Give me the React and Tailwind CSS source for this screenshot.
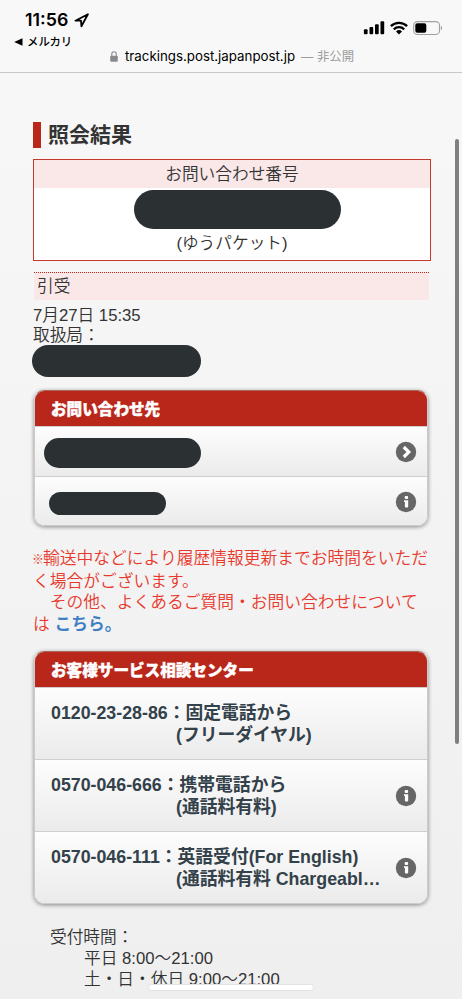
import React from "react";

// icons

function ArrowIcon() {
  return (
    <svg width="22" height="22" viewBox="0 0 22 22" className="block">
      <circle cx="11" cy="11" r="10.2" fill="#666" />
      <path d="M8.8 6 L13.8 11 L8.8 16" fill="none" stroke="#fff" strokeWidth="3.2" />
    </svg>
  );
}

function InfoIcon() {
  return (
    <svg width="22" height="22" viewBox="0 0 22 22" className="block">
      <circle cx="11" cy="11" r="10.2" fill="#666" />
      <rect x="9.7" y="5.1" width="3.4" height="2.9" rx="0.9" fill="#fff" />
      <path d="M9 9.3h4.2v6.3q0 1-1 1h-1.3q-1 0-1-1v-4.6H9z" fill="#fff" />
    </svg>
  );
}

function SignalIcon() {
  return (
    <svg width="22" height="14" viewBox="0 0 22 14" className="block">
      <rect x="0.9" y="8.2" width="3.7" height="5" rx="1" />
      <rect x="6.5" y="6" width="3.7" height="7.2" rx="1" />
      <rect x="12" y="3.2" width="3.7" height="10" rx="1" />
      <rect x="17.5" y="0.3" width="3.7" height="12.9" rx="1" />
    </svg>
  );
}

function WifiIcon() {
  return (
    <svg width="18" height="14" viewBox="0 0 18 14" className="block">
      <g fill="none" stroke="#000" strokeWidth="2.3">
        <path d="M0.9 5.1a11.6 11.6 0 0 1 16.2 0" />
        <path d="M3.8 8.3a7.5 7.5 0 0 1 10.4 0" />
      </g>
      <path d="M9 13.5L6 10.4a4.3 4.3 0 0 1 6 0z" />
    </svg>
  );
}

function BatteryIcon() {
  return (
    <svg width="30" height="14" viewBox="0 0 30 14" className="block">
      <rect x="0.7" y="0.6" width="25.8" height="12.9" rx="3.8" fill="none" stroke="#a0a0a0" strokeWidth="1.1" />
      <rect x="2.3" y="2.2" width="11" height="9.6" rx="2" />
      <path d="M27.8 4.8c1.7.6 1.7 3.8 0 4.4z" fill="#a0a0a0" />
    </svg>
  );
}

function LocationIcon() {
  return (
    <svg width="15" height="15" viewBox="0 0 15 15" className="block">
      <path
        d="M13.9 1.2L1.4 7.7H7L7.4 13.3z"
        fill="none"
        stroke="#000"
        strokeWidth="1.8"
        strokeLinejoin="round"
      />
    </svg>
  );
}

function LockIcon() {
  return (
    <svg width="8" height="11" viewBox="0 0 8 11" className="block">
      <rect x="0.2" y="4.7" width="7.6" height="6" rx="1" fill="#8a8a8e" />
      <path d="M1.8 5V3a2.2 2.2 0 0 1 4.4 0v2" fill="none" stroke="#8a8a8e" strokeWidth="1.1" />
    </svg>
  );
}

// status bar and address

function StatusBar() {
  return (
    <header className="h-[73px] border-b border-[#c9c9c9] bg-[#f8f8f8] font-normal text-black">
      <div className="flex h-[49px] justify-between">
        <div className="pt-[9px]">
          <div className="flex items-center gap-[5px] pl-[25px] font-['Inter','Noto_Sans_CJK_JP',sans-serif] text-[17.8px] leading-[22px] font-semibold">
            <span className="w-[44px] whitespace-nowrap">11:56</span>
            <LocationIcon />
          </div>
          <div className="flex items-center gap-[4px] pt-[3px] pl-[14px]">
            <svg width="9" height="8" viewBox="0 0 9 8">
              <path d="M8.5 0.3v7.4L0.2 4z" />
            </svg>
            <span className="text-[11.4px] leading-[16px] font-medium">メルカリ</span>
          </div>
        </div>
        <div className="flex gap-[5px] pt-[21px] pr-[19px]">
          <SignalIcon />
          <WifiIcon />
          <BatteryIcon />
        </div>
      </div>
      <div className="flex items-center pl-[110px] font-['Inter','Noto_Sans_CJK_JP',sans-serif] text-[13.3px] leading-[15px] whitespace-nowrap">
        <LockIcon />
        <span className="ml-[7px] w-[171px]">trackings.post.japanpost.jp</span>
        <span className="ml-[5px] text-[12.4px] text-[#9c9c9c]">— 非公開</span>
      </div>
    </header>
  );
}

// list panel

const contactRows = [
  { bar: "ml-[9px] mt-[2px] h-[30px] w-[157px]", size: "h-[50px] pt-px", icon: ArrowIcon },
  { bar: "ml-[14px] mt-[2px] h-[23px] w-[117px]", size: "h-[49px] pt-[2px]", icon: InfoIcon },
];

const phoneRows = [
  { label: "0120-23-28-86：固定電話から", note: "(フリーダイヤル)" },
  { label: "0570-046-666：携帯電話から", note: "(通話料有料)", icon: InfoIcon },
  {
    label: "0570-046-111：英語受付(For English)",
    note: "(通話料有料 Chargeabl…",
    icon: InfoIcon,
  },
];

function Panel({ title, children }) {
  return (
    <section className="ml-[34px] w-[394px] overflow-hidden rounded-[10px] border border-[#cfcaca] border-t-[#a9685f] shadow-[0_1px_4px_rgba(0,0,0,0.45)]">
      <h2 className="h-[35px] bg-[#b9261a] pl-[16px] text-[15.6px] leading-[37px] font-black text-white [-webkit-text-stroke:0.4px_white]">
        {title}
      </h2>
      {children}
    </section>
  );
}

function Row({ size, icon: Icon, children }) {
  return (
    <div
      className={`flex items-center justify-between border-t border-[#d3cccc] bg-linear-to-b from-[#fdfdfd] to-[#ebebeb] pr-[10px] ${size}`}
    >
      {children}
      {Icon && <Icon />}
    </div>
  );
}

export default function App() {
  return (
    <div className="relative h-[999px] w-[462px] overflow-hidden bg-linear-to-b from-[#f8f8f8] to-[#efefef] font-['Liberation_Sans','Noto_Sans_CJK_JP',sans-serif] text-[16.7px] font-[350] text-[#333]">
      <StatusBar />

      <div className="mt-[49px] ml-[33px] flex h-[26px] items-center">
        <span className="h-[26px] w-[8px] bg-[#b9261a]" />
        <h1 className="ml-[7px] text-[21px] leading-[26px] font-bold">照会結果</h1>
      </div>

      <div className="mt-[11px] ml-[33px] flex h-[102px] w-[398px] flex-col items-center border border-[#c5382c] bg-white">
        <div className="h-[28px] w-full bg-[#fae8e8] text-center leading-[29px]">お問い合わせ番号</div>
        <div className="mt-[2px] ml-[10px] h-[39px] w-[207px] rounded-full bg-[#2b3033]" />
        <div className="leading-[29px]">(ゆうパケット)</div>
      </div>

      <div className="mt-[11px] ml-[34px] h-[28px] w-[395px] border-t border-dotted border-[#b9261a] bg-[#fae8e8] pl-[3px] leading-[27px]">
        引受
      </div>
      <div className="mt-[6px] h-[39px] pl-[33px] leading-[20px]">
        <div>7月27日 15:35</div>
        <div>取扱局：</div>
      </div>
      <div className="ml-[32px] h-[32px] w-[169px] rounded-full bg-[#2b3033]" />

      <div className="mt-[13px]">
        <Panel title="お問い合わせ先">
          {contactRows.map(({ bar, size, icon }, key) => (
            <Row key={key} size={size} icon={icon}>
              <span className={`rounded-full bg-[#2b3033] ${bar}`} />
            </Row>
          ))}
        </Panel>
      </div>

      <p className="mt-[22px] pl-[33px] text-[16.75px] leading-[21.2px] whitespace-nowrap text-[#e8392d]">
        <span className="inline-block w-[10px] text-[12px] font-bold -indent-px">※</span>
        輸送中などにより履歴情報更新までお時間をいただ
        <br />
        く場合がございます。
        <br />
        <span className="pl-[16.7px]">その他、よくあるご質問・お問い合わせについて</span>
        <br />
        は <b className="font-bold text-[#3f80c4]">こちら。</b>
      </p>

      <div className="mt-[16px]">
        <Panel title="お客様サービス相談センター">
          {phoneRows.map(({ label, note, icon }, key) => (
            <Row key={key} size="h-[72px] pt-px" icon={icon}>
              <div className="pt-px pl-[16px] text-[17.8px] leading-[22px] font-bold whitespace-nowrap text-[#33414a]">
                <div>{label}</div>
                <div className="pl-[125px]">{note}</div>
              </div>
            </Row>
          ))}
        </Panel>
      </div>

      <div className="mt-[23px] pl-[50px] leading-[21.2px] whitespace-nowrap">
        <div>受付時間：</div>
        <div className="pl-[34px]">平日 8:00～21:00</div>
        <div className="pl-[34px]">土・日・休日 9:00～21:00</div>
      </div>

      {/* scrollbar and home indicator */}
      <div className="absolute top-[139px] right-[3px] h-[605px] w-[4px] rounded-full bg-[#7f7f7f]" />
      <div className="absolute top-[984px] left-[148px] h-[7px] w-[166px] rounded-full border border-[#e2e2e2] bg-white" />
    </div>
  );
}
